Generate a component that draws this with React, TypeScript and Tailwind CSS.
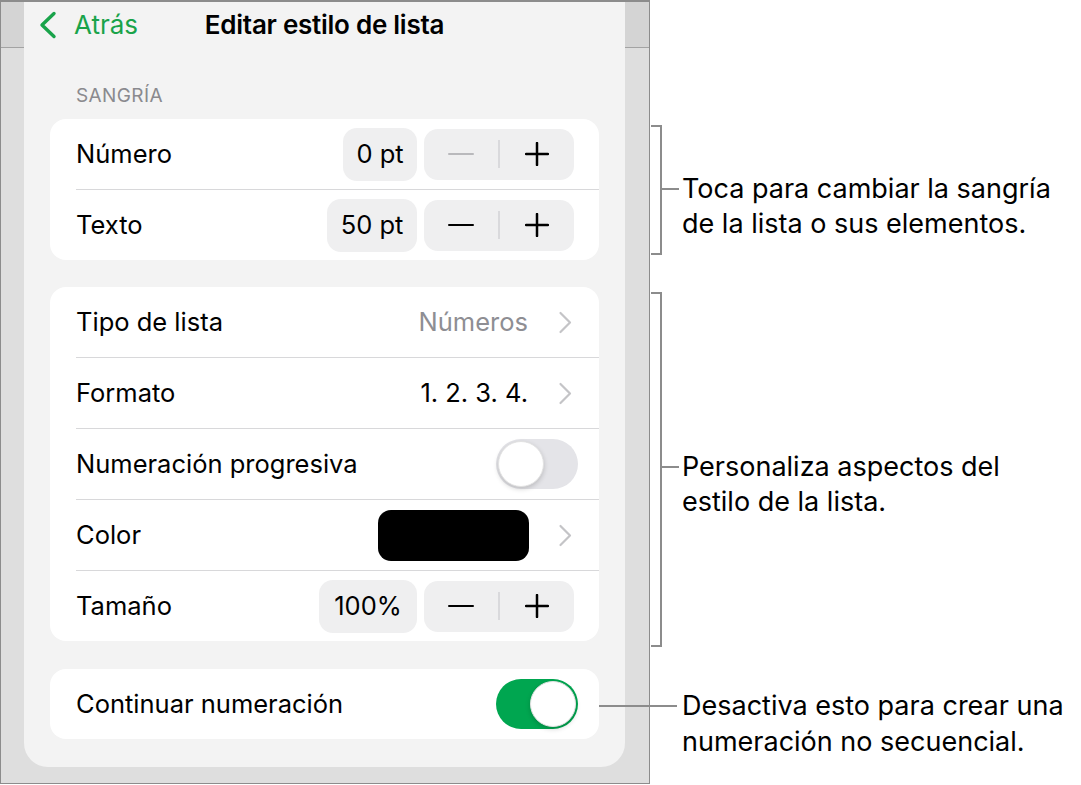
import React from "react";

const font = { fontFamily: "Inter, 'Liberation Sans', sans-serif" };

function Chevron() {
  return (
    <svg width="15" height="23" viewBox="0 0 15 23" fill="none">
      <path d="M2.5 2 L12 11.5 L2.5 21" stroke="#c4c4c7" strokeWidth="2.2" strokeLinecap="round" strokeLinejoin="round" />
    </svg>
  );
}

function Stepper({ value, minusOff, pillW }: { value: string; minusOff?: boolean; pillW: string }) {
  return (
    <div className="flex items-center gap-[7px]">
      <div className={`h-[53px] ${pillW} rounded-[14px] bg-[#efeff0] flex items-center justify-center text-[25.5px] text-black`}>
        {value}
      </div>
      <div className="h-[51px] w-[150px] rounded-[14px] bg-[#efeff0] flex items-center">
        <div className="flex-1 flex items-center justify-center">
          <div className={`w-[26px] h-[2.5px] rounded-full ${minusOff ? "bg-[#b9b9bc]" : "bg-black"}`} />
        </div>
        <div className="w-[2px] h-[28px] bg-[#d9d9dc]" />
        <div className="flex-1 flex items-center justify-center">
          <svg width="24" height="24" viewBox="0 0 24 24">
            <path d="M12 1 V23 M1 12 H23" stroke="#000" strokeWidth="2.5" strokeLinecap="round" />
          </svg>
        </div>
      </div>
    </div>
  );
}

function Toggle({ on }: { on?: boolean }) {
  return (
    <div className={`w-[82px] h-[50px] rounded-full p-[2px] flex ${on ? "bg-[#00a650] justify-end" : "bg-[#e4e4e8] justify-start"}`}>
      <div className="w-[46px] h-[46px] rounded-full bg-white shadow-[0_2px_5px_rgba(0,0,0,0.18)] border border-[#e2e2e2]" />
    </div>
  );
}

function Row({ label, children, last, pr }: { label: string; children?: React.ReactNode; last?: boolean; pr: string }) {
  return (
    <div className="pl-[26px] flex flex-col">
      <div className={`h-[70px] flex items-center justify-between ${pr}`}>
        <span className="text-[25.5px] text-black">{label}</span>
        {children}
      </div>
      {!last && <div className="h-px bg-[#d8d8da]" />}
    </div>
  );
}

function Strip() {
  return (
    <div className="flex flex-col bg-[#dedede]">
      <div className="h-[46px] bg-[#d4d4d4] border-b border-[#a3a3a3]" />
    </div>
  );
}

export default function App() {
  return (
    <div className="w-[1081px] h-[785px] bg-white flex items-start" style={font}>
      {/* iPad panel frame */}
      <div className="w-[650px] h-[784px] border border-t-2 border-[#8c8c8c] bg-[#dedede] grid grid-cols-[23px_601px_24px]">
        <Strip />
        <div className="h-[765px] bg-[#f3f3f3] rounded-b-[24px] px-[26px] flex flex-col">
          <div className="h-[46px] -mx-[26px] grid grid-cols-[1fr_auto_1fr] items-center">
            <div className="flex items-center pl-[15px] gap-[17px] text-[#19a34a]">
              <svg width="18" height="28" viewBox="0 0 18 28" fill="none">
                <path d="M15 2.5 L3 14 L15 25.5" stroke="#19a34a" strokeWidth="3.4" strokeLinecap="round" strokeLinejoin="round" />
              </svg>
              <span className="text-[26px] leading-none">Atrás</span>
            </div>
            <span className="text-[26px] font-semibold text-black leading-none tracking-[-0.01em]">Editar estilo de lista</span>
            <div />
          </div>

          <div className="mt-[37px] pl-[26px] h-[22px] text-[19px] leading-[22px] tracking-[0.02em] text-[#8a8a8e]">SANGRÍA</div>

          <div className="mt-[12px] bg-white rounded-[16px] flex flex-col">
            <Row label="Número" pr="pr-[25px]">
              <Stepper value="0 pt" minusOff pillW="w-[74px]" />
            </Row>
            <Row label="Texto" pr="pr-[25px]" last>
              <Stepper value="50 pt" pillW="w-[90px]" />
            </Row>
          </div>

          <div className="mt-[27px] bg-white rounded-[16px] flex flex-col">
            <Row label="Tipo de lista" pr="pr-[26px]">
              <div className="flex items-center gap-[30px]">
                <span className="text-[25.5px] text-[#8e8e93]">Números</span>
                <Chevron />
              </div>
            </Row>
            <Row label="Formato" pr="pr-[26px]">
              <div className="flex items-center gap-[30px]">
                <span className="text-[25.5px] text-black">1. 2. 3. 4.</span>
                <Chevron />
              </div>
            </Row>
            <Row label="Numeración progresiva" pr="pr-[21px]">
              <Toggle />
            </Row>
            <Row label="Color" pr="pr-[26px]">
              <div className="flex items-center gap-[29px]">
                <div className="w-[151px] h-[51px] rounded-[13px] bg-black" />
                <Chevron />
              </div>
            </Row>
            <Row label="Tamaño" pr="pr-[25px]" last>
              <Stepper value="100%" pillW="w-[98px]" />
            </Row>
          </div>

          <div className="mt-[28px] bg-white rounded-[16px] flex flex-col">
            <Row label="Continuar numeración" pr="pr-[21px]" last>
              <Toggle on />
            </Row>
          </div>
        </div>
        <Strip />
      </div>

      {/* callouts */}
      <div className="flex flex-col pt-[125px] text-[27px] leading-[35px] text-black">
        <div className="flex">
          <div className="ml-[1px] w-[11px] h-[130px] border-y-2 border-r-2 border-[#8c8c8c]" />
          <div className="mt-[46px] flex items-start">
            <div className="mt-[17px] w-[17px] h-[2px] bg-[#8c8c8c]" />
            <div className="ml-[3px] whitespace-nowrap">
              Toca para cambiar la sangría
              <br />
              de la lista o sus elementos.
            </div>
          </div>
        </div>

        <div className="mt-[37px] flex">
          <div className="ml-[1px] w-[11px] h-[355px] border-y-2 border-r-2 border-[#8c8c8c]" />
          <div className="mt-[157px] flex items-start">
            <div className="mt-[17px] w-[17px] h-[2px] bg-[#8c8c8c]" />
            <div className="ml-[3px] whitespace-nowrap">
              Personaliza aspectos del
              <br />
              estilo de la lista.
            </div>
          </div>
        </div>

        <div className="mt-[41px] relative pl-[32px] leading-[36px] whitespace-nowrap">
          <div className="absolute left-[-51px] top-[17px] w-[78px] h-[2px] bg-[#8c8c8c]" />
          Desactiva esto para crear una
          <br />
          numeración no secuencial.
        </div>
      </div>
    </div>
  );
}
